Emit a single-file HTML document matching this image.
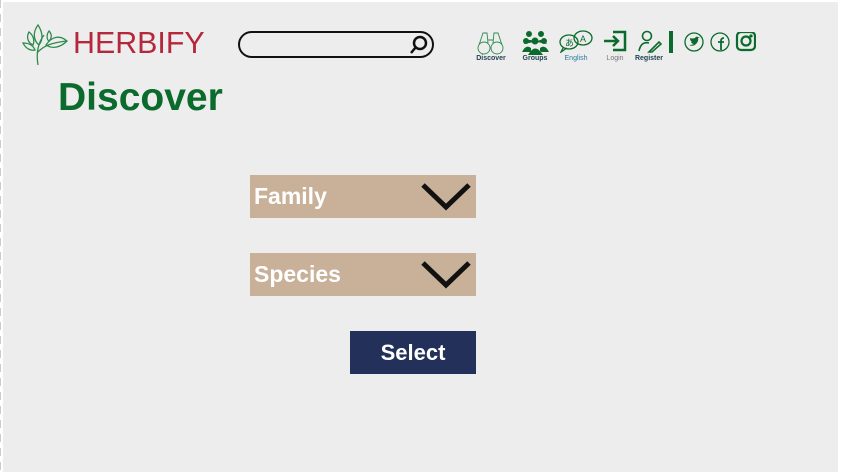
<!DOCTYPE html>
<html><head><meta charset="utf-8"><style>
*{margin:0;padding:0;box-sizing:border-box}
body{width:842px;height:472px;background:#fff;position:relative;overflow:hidden;font-family:"Liberation Sans",sans-serif}
#bg{position:absolute;left:3px;top:2px;width:835px;height:470px;background:#ededed}
#dash{position:absolute;left:0;top:0;width:1px;height:472px;background:repeating-linear-gradient(#ccc 0 8px,#fff 8px 14px)}
.a{position:absolute}
.lbl{position:absolute;font-size:7px;font-weight:bold;text-align:center;width:50px}
.dd{position:absolute;left:250px;width:226px;height:43px;background:#c8b198;color:#fff;font-weight:bold;font-size:23px;padding-left:4px;line-height:43px}
.dd svg{position:absolute;right:5px;top:6px}
</style></head><body>
<div id="bg"></div><div id="dash"></div>
<svg class="a" style="left:22px;top:23px" width="46" height="43" viewBox="0 0 46 43" fill="none" stroke="#2e8b4e" stroke-width="1.3">
<path d="M16 42 C14 30 16 20 22 12"/><path d="M15 30 C22 22 30 20 44 18"/><path d="M16 2 C10 10 12 18 17 22 C22 16 20 8 16 2Z"/><path d="M7 9 C4 14 6 20 11 22 C13 17 11 12 7 9Z"/><path d="M1 20 C4 26 9 28 13 27 C11 22 6 20 1 20Z"/><path d="M27 8 C24 12 25 17 27 18 C30 15 30 11 27 8Z"/><path d="M24 22 C30 13 38 12 45 18 C38 25 30 26 24 22Z"/>
</svg>
<div class="a" style="left:73px;top:26px;font-size:31px;color:#b5273a;letter-spacing:0px;line-height:34px;transform:scaleX(0.98);transform-origin:left">HERBIFY</div>
<div class="a" style="left:238px;top:31px;width:196px;height:27px;border:2.5px solid #111;border-radius:14px"></div>
<svg class="a" style="left:408px;top:34px" width="22" height="22" viewBox="0 0 22 22" fill="none" stroke="#111" stroke-width="2.5"><circle cx="12" cy="9" r="6"/><path d="M8 13 L3 19"/></svg>
<div class="a" style="left:58px;top:76px;font-size:39px;font-weight:bold;color:#0b6b2c;line-height:44px">Discover</div>

<svg class="a" style="left:477px;top:30px" width="27" height="25" viewBox="0 0 27 25" fill="none" stroke="#2e8b4e" stroke-width="0.9"><circle cx="7" cy="18" r="6"/><circle cx="20" cy="18" r="6"/><path d="M2 15 L6 3 L10 3 L11 13 M25 15 L21 3 L17 3 L16 13 M11 10 L16 10"/></svg>
<div class="lbl" style="left:466px;top:55px;color:#245">Discover</div>
<svg class="a" style="left:522px;top:30px" width="27" height="25" viewBox="0 0 27 25" fill="#0b6b2c"><circle cx="7" cy="4" r="3"/><circle cx="19" cy="4" r="3"/><circle cx="4" cy="11" r="3"/><circle cx="22" cy="11" r="3"/><circle cx="13" cy="11" r="3.5"/><path d="M0 22 Q4 14 9 18 L9 22Z M27 22 Q23 14 18 18 L18 22Z M6 25 Q13 12 21 25Z M2 14 Q7 7 12 12 L2 14Z M25 14 Q20 7 15 12Z"/></svg>
<div class="lbl" style="left:510px;top:55px;color:#245">Groups</div>
<svg class="a" style="left:559px;top:29px" width="34" height="24" viewBox="0 0 34 24" fill="none" stroke="#0b6b2c" stroke-width="1.3"><ellipse cx="10" cy="13" rx="9" ry="7"/><path d="M4 19 L2 23 L8 19"/><ellipse cx="24" cy="9" rx="9" ry="7"/><text x="6" y="17" font-size="9" fill="#0b6b2c" stroke="none" font-family="Noto Sans CJK JP">あ</text><text x="21" y="13" font-size="9" fill="#0b6b2c" stroke="none">A</text></svg>
<div class="lbl" style="left:551px;top:55px;color:#2a7aa0;font-weight:normal">English</div>
<svg class="a" style="left:603px;top:30px" width="24" height="22" viewBox="0 0 24 22" fill="none" stroke="#0b6b2c" stroke-width="2.5"><path d="M10 2 H22 V20 H10"/><path d="M1 11 H15 M10 6 L15 11 L10 16"/></svg>
<div class="lbl" style="left:590px;top:55px;color:#777;font-weight:normal">Login</div>
<svg class="a" style="left:638px;top:29px" width="24" height="24" viewBox="0 0 24 24" fill="none" stroke="#0b6b2c" stroke-width="1.6"><circle cx="9" cy="7" r="4.5"/><path d="M1 22 Q3 12 11 14"/><path d="M12 22 L21 13 L23 15 L14 23 L11 23Z"/></svg>
<div class="lbl" style="left:624px;top:55px;color:#245">Register</div>
<div class="a" style="left:669px;top:31px;width:4px;height:22px;background:#0b6b2c"></div>
<svg class="a" style="left:684px;top:32px" width="72" height="22" viewBox="0 0 72 22" fill="none" stroke="#0b6b2c" stroke-width="1.3"><circle cx="10" cy="10" r="9"/><path d="M5 13 Q9 15 12 12 Q15 9 14 6 L16 5 L14 5 Q12 4 11 6 Q8 7 6 6 Q6 9 8 10 L7 10 Q8 12 10 12 Q8 13 5 13Z" fill="#0b6b2c" stroke="none"/><circle cx="36" cy="10" r="9"/><path d="M37 18 V9 Q37 6 40 6 M34 10 H40" stroke-width="1.8"/><rect x="53" y="0" width="18" height="18" rx="4" stroke-width="2.2"/><circle cx="62" cy="9" r="4.5" stroke-width="2.2"/><circle cx="67" cy="4" r="1" fill="#0b6b2c"/></svg>

<div class="dd" style="top:175px">Family<svg width="50" height="30" viewBox="0 0 50 30"><path d="M2 4 L25 26 L48 4" fill="none" stroke="#111" stroke-width="5"/></svg></div>
<div class="dd" style="top:253px">Species<svg width="50" height="30" viewBox="0 0 50 30"><path d="M2 4 L25 26 L48 4" fill="none" stroke="#111" stroke-width="5"/></svg></div>
<div class="a" style="left:350px;top:331px;width:126px;height:43px;background:#22305a;color:#fff;font-weight:bold;font-size:22px;text-align:center;line-height:43px">Select</div>
</body></html>
